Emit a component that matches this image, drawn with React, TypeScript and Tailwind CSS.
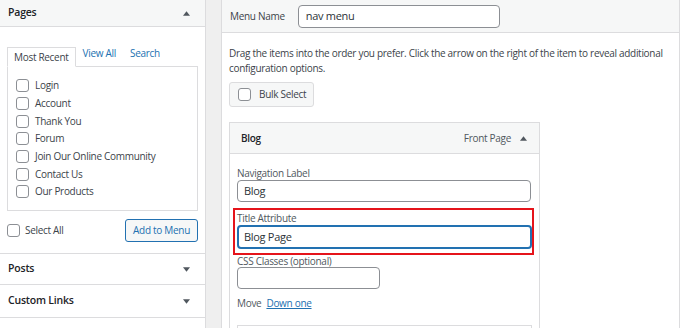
import { useState } from "react";

const pages = ["Login", "Account", "Thank You", "Forum", "Join Our Online Community", "Contact Us", "Our Products"];

function Box({ className = "" }: { className?: string }) {
  return <span className={"inline-block h-[13px] w-[13px] shrink-0 rounded-[3px] border border-[#8c8f94] bg-white " + className} />;
}

function Caret({ up }: { up?: boolean }) {
  return (
    <svg width="7" height="5" viewBox="0 0 8 5" className="fill-[#50575e]">
      {up ? <path d="M0 5 L4 0 L8 5 Z" /> : <path d="M0 0 L8 0 L4 5 Z" />}
    </svg>
  );
}

function Section({ title, h }: { title: string; h: string }) {
  return (
    <div className={"flex items-center justify-between border-b border-[#dcdcde] px-[8px] " + h}>
      <span className="text-[10.5px] font-semibold tracking-[-0.2px] text-[#1d2327]">{title}</span>
      <span className="mr-[7px]"><Caret /></span>
    </div>
  );
}

export default function App() {
  const [title] = useState("Blog Page");
  return (
    <div
      className="flex h-[328px] w-[680px] overflow-hidden bg-white text-[10px] tracking-[-0.3px] text-[#3c434a]"
      style={{ fontFamily: '"Open Sans", "Noto Sans", sans-serif' }}
    >
      {/* left column */}
      <div className="flex w-[206px] shrink-0 flex-col border-r border-[#dcdcde] bg-white">
        <div className="flex h-[27px] items-center justify-between border-b border-[#dcdcde] bg-[#f6f7f7] px-[8px]">
          <span className="text-[10.5px] font-semibold tracking-[-0.2px] text-[#1d2327]">Pages</span>
          <span className="mr-[7px]"><Caret up /></span>
        </div>
        <div className="h-[227px] border-b border-[#dcdcde] px-[7px] pt-[21px]">
          <div className="flex h-[18px] items-end">
            <div className="relative z-10 -mb-px flex h-[20px] items-center border border-b-white border-[#dcdcde] bg-white px-[6px] text-[#3c434a]">
              Most Recent
            </div>
            <span className="mb-[5px] ml-[7px] text-[#2271b1]">View All</span>
            <span className="mb-[5px] ml-[14px] text-[#2271b1]">Search</span>
          </div>
          <div className="flex h-[145px] flex-col border border-[#dcdcde] px-[8px] pt-[10px]">
            {pages.map((p) => (
              <label key={p} className="flex h-[17.7px] items-center gap-[6px] text-[#3c434a]">
                <Box />
                {p}
              </label>
            ))}
          </div>
          <div className="mt-[8px] flex items-center justify-between">
            <label className="flex items-center gap-[5px]">
              <Box />
              Select All
            </label>
            <button className="h-[23px] rounded-[3px] border border-[#2271b1] bg-[#f6f7f7] px-[7px] text-[#2271b1]">
              Add to Menu
            </button>
          </div>
        </div>
        <Section title="Posts" h="h-[31px]" />
        <Section title="Custom Links" h="h-[33px]" />
      </div>

      {/* gutter */}
      <div className="w-[15px] shrink-0 bg-[#efefef]" />

      {/* right column */}
      <div className="flex flex-1 flex-col border-l border-r border-[#dcdcde]">
        <div className="flex h-[33px] shrink-0 items-center gap-[13px] border-b border-[#dcdcde] bg-[#f6f7f7] pl-[8px]">
          <span>Menu Name</span>
          <div className="flex h-[23px] w-[202px] items-center rounded-[4px] border border-[#8c8f94] bg-white px-[7px] text-[11px] text-[#2c3338]">
            nav menu
          </div>
        </div>
        <div className="px-[7px] pt-[13px]">
          <p className="leading-[15px] text-[#3c434a]">
            Drag the items into the order you prefer. Click the arrow on the right of the item to reveal additional configuration options.
          </p>
          <button className="mt-[6px] flex h-[25px] items-center gap-[8px] rounded-[3px] border border-[#dcdcde] bg-[#f6f7f7] pl-[8px] pr-[7px] text-[#3c434a]">
            <Box />
            Bulk Select
          </button>
          <div className="mt-[15px] w-[311px] border border-[#dcdcde]">
            <div className="flex h-[31px] items-center justify-between border-b border-[#dcdcde] bg-[#f6f7f7] pl-[11px] pr-[12px]">
              <span className="font-semibold text-[#1d2327]">Blog</span>
              <span className="flex items-center gap-[9px] text-[#50575e]">
                Front Page
                <Caret up />
              </span>
            </div>
            <div className="px-[7px] pt-[12px] pb-[20px]">
              <div className="leading-[14px] text-[#50575e]">Navigation Label</div>
              <div className="flex h-[22px] w-[294px] items-center rounded-[4px] border border-[#8c8f94] px-[6px] text-[11px] text-[#2c3338]">
                Blog
              </div>
              <div className="-ml-[4px] -mr-[2px] mt-[6px] border-2 border-[#e5141b] pl-[2px] pt-[1px] pb-[4px]">
                <div className="leading-[14px] text-[#50575e]">Title Attribute</div>
                <div className="flex h-[24px] items-center rounded-[4px] border-2 border-[#2271b1] px-[5px] text-[11px] text-[#2c3338]">
                  {title}
                </div>
              </div>
              <div className="leading-[12px] text-[#50575e]">CSS Classes (optional)</div>
              <div className="h-[22px] w-[143px] rounded-[4px] border border-[#8c8f94]" />
              <div className="mt-[7px] flex gap-[5px] leading-[14px]">
                <span className="text-[#50575e]">Move</span>
                <span className="text-[#2271b1] underline">Down one</span>
              </div>
              <div className="mt-[15px] h-[20px] border border-[#dcdcde]" />
            </div>
          </div>
        </div>
      </div>
    </div>
  );
}
